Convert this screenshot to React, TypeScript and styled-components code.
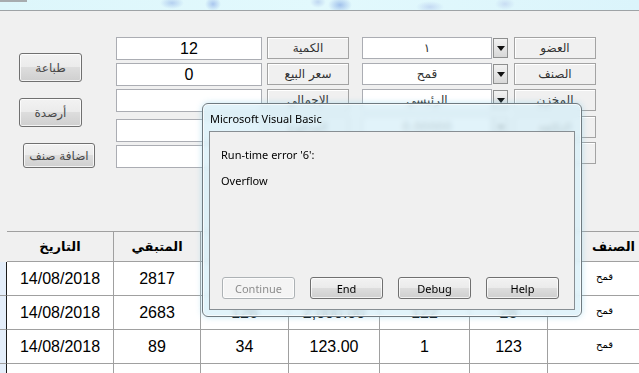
import styled, { createGlobalStyle } from "styled-components";

const GlobalStyle = createGlobalStyle`
  html, body {
    margin: 0;
    padding: 0;
    background: #f0f0f0;
    overflow: hidden;
  }
  * {
    box-sizing: border-box;
  }
`;

const arabic = `"DejaVu Sans", Tahoma, sans-serif`;
const latin = `"Liberation Sans", Arial, sans-serif`;
const ui = `"Segoe UI", "Noto Sans", "Liberation Sans", sans-serif`;

const Page = styled.div`
  position: relative;
  width: 639px;
  height: 373px;
  overflow: hidden;
  background: #f0f0f0;
`;

/* the blurred desktop behind the main window title */
const TopStrip = styled.div`
  position: relative;
  height: 11px;
  border-bottom: 1px solid #9ea3a6;
  background:
    radial-gradient(ellipse 12px 6px at 172px 3px, #b4d0f0, transparent),
    radial-gradient(ellipse 8px 7px at 213px 4px, #a9c6ee, transparent),
    radial-gradient(ellipse 8px 6px at 318px 2px, #c0d8f2, transparent),
    radial-gradient(ellipse 12px 8px at 340px 5px, #a2c2ec, transparent),
    radial-gradient(ellipse 14px 6px at 430px 7px, #c4daf3, transparent),
    radial-gradient(ellipse 10px 6px at 505px 4px, #c8ddf3, transparent),
    linear-gradient(90deg, #ddf6fb, #e2f9fd 50%, #dbf4fb);

  &::before {
    content: "";
    position: absolute;
    left: 0;
    top: 0;
    width: 27px;
    height: 2px;
    background: #a7acaf;
  }
`;

const FormArea = styled.div`
  display: flex;
  height: 220px;
  padding-top: 26px;
`;

const ButtonColumn = styled.div`
  display: flex;
  flex-direction: column;
  gap: 16px;
  width: 116px;
  padding: 16px 0 0 19px;
`;

const WinButton = styled.button<{ $w: number; $h: number; $indent?: number }>`
  width: ${(p) => p.$w}px;
  height: ${(p) => p.$h}px;
  margin-left: ${(p) => p.$indent ?? 0}px;
  padding: 0;
  border: 1px solid #707070;
  border-radius: 3px;
  background: linear-gradient(#f2f2f2 0%, #ebebeb 49%, #dddddd 50%, #cfcfcf 100%);
  box-shadow: inset 0 0 0 1px rgba(255, 255, 255, 0.75);
  font-family: ${arabic};
  font-size: 12px;
  color: #4a4a4a;
  cursor: default;
`;

const Fields = styled.div`
  display: flex;
  flex-direction: column;
  gap: 4px;
`;

const FieldRow = styled.div<{ $gapAbove?: number }>`
  display: flex;
  align-items: flex-start;
  height: 22px;
  margin-top: ${(p) => p.$gapAbove ?? 0}px;
`;

const TextBox = styled.div<{ $drop?: number }>`
  width: 146px;
  height: 23px;
  margin-top: ${(p) => p.$drop ?? 0}px;
  background: #fff;
  border: 1px solid #abadb3;
  font-family: ${latin};
  font-size: 16px;
  line-height: 21px;
  text-align: center;
  color: #000;
`;

const FieldLabel = styled.div<{ $w: number; $ml: number }>`
  width: ${(p) => p.$w}px;
  height: 22px;
  margin-left: ${(p) => p.$ml}px;
  border: 1px solid #a3a3a3;
  box-shadow: inset 1px 1px 0 #ffffff;
  background: #f0f0f0;
  font-family: ${arabic};
  font-size: 12px;
  line-height: 20px;
  text-align: center;
  color: #333;
`;

const Combo = styled.div`
  display: flex;
  gap: 1px;
  margin-left: 13px;
  height: 22px;
`;

const ComboText = styled.div`
  width: 130px;
  height: 22px;
  background: #fff;
  border: 1px solid #abadb3;
  font-family: ${arabic};
  font-size: 12px;
  line-height: 20px;
  text-align: center;
  color: #333;
`;

const ComboButton = styled.div`
  display: flex;
  align-items: center;
  justify-content: center;
  width: 15px;
  height: 20px;
  margin-top: 1px;
  border: 1px solid #8e8f8f;
  background: linear-gradient(#f2f2f2, #d8d8d8);

  &::after {
    content: "";
    border-left: 4px solid transparent;
    border-right: 4px solid transparent;
    border-top: 5px solid #111;
  }
`;

/* grid */
const Grid = styled.div`
  display: grid;
  grid-template-columns: 7px 107px 87px 88px 91px 90px 78px 116px;
  grid-template-rows: 31px;
  grid-auto-rows: 34px;
  width: 664px;
`;

const Selector = styled.div<{ $head?: boolean }>`
  background: ${(p) => (p.$head ? "#f0f0f0" : "#e4eefa")};
  border-right: 1px solid ${(p) => (p.$head ? "#f0f0f0" : "#1c1c1c")};
  border-bottom: 1px solid ${(p) => (p.$head ? "#f0f0f0" : "#a0a0a0")};
`;

const HeadCell = styled.div<{ $end?: boolean }>`
  display: flex;
  align-items: center;
  justify-content: ${(p) => (p.$end ? "flex-end" : "center")};
  padding-right: ${(p) => (p.$end ? "28px" : "0")};
  background: #f0f0f0;
  border-top: 1px solid #a0a0a0;
  border-right: 1px solid #a0a0a0;
  border-bottom: 1px solid #a0a0a0;
  font-family: ${arabic};
  font-weight: bold;
  font-size: 13px;
  color: #000;
`;

const Cell = styled.div<{ $item?: boolean }>`
  display: flex;
  align-items: center;
  justify-content: ${(p) => (p.$item ? "flex-end" : "center")};
  padding-right: ${(p) => (p.$item ? "50px" : "0")};
  padding-bottom: ${(p) => (p.$item ? "4px" : "0")};
  background: #fff;
  border-right: 1px solid #a0a0a0;
  border-bottom: 1px solid #a0a0a0;
  font-family: ${(p) => (p.$item ? arabic : latin)};
  font-size: ${(p) => (p.$item ? "10px" : "16px")};
  color: #000;
`;

/* error dialog */
const Dialog = styled.div`
  position: absolute;
  left: 202px;
  top: 103px;
  width: 380px;
  height: 214px;
  display: flex;
  flex-direction: column;
  padding: 0 6px 6px 6px;
  border: 1px solid #6f7a80;
  border-radius: 6px;
  background: rgba(218, 240, 249, 0.8);
  backdrop-filter: blur(2.5px);
  box-shadow: 0 0 6px rgba(120, 200, 230, 0.45), inset 0 0 0 1px rgba(255, 255, 255, 0.7);
`;

const DialogTitle = styled.div`
  height: 27px;
  padding-left: 1px;
  font-family: ${ui};
  font-size: 11px;
  line-height: 29px;
  color: #000;
  white-space: nowrap;
`;

const DialogBody = styled.div`
  flex: 1;
  display: flex;
  flex-direction: column;
  padding: 15px 0 0 11px;
  background: #f0f0f0;
  border: 1px solid #878e93;
  font-family: ${ui};
  font-size: 11px;
  color: #000;
`;

const Message = styled.div`
  height: 26px;
  line-height: 16px;
`;

const DialogButtons = styled.div`
  display: flex;
  gap: 15px;
  margin-top: auto;
  margin-bottom: 10px;
  margin-left: 1px;
`;

const DlgButton = styled.button<{ $disabled?: boolean }>`
  width: 73px;
  height: 22px;
  padding: 0;
  border: 1px solid ${(p) => (p.$disabled ? "#adb2b5" : "#707070")};
  border-radius: 3px;
  background: ${(p) =>
    p.$disabled
      ? "#f4f4f4"
      : "linear-gradient(#f2f2f2 0%, #ebebeb 49%, #dddddd 50%, #cfcfcf 100%)"};
  box-shadow: inset 0 0 0 1px rgba(255, 255, 255, 0.7);
  font-family: ${ui};
  font-size: 11px;
  color: ${(p) => (p.$disabled ? "#8d8d8d" : "#000")};
  cursor: default;
`;

const fieldRows = [
  { val: "12", mid: "الكمية", combo: "١", right: "العضو" },
  { val: "0", mid: "سعر البيع", combo: "قمح", right: "الصنف" },
  { val: "", mid: "الإجمالي", combo: "الرئيسي", right: "المخزن" },
  { val: "", mid: "المدفوع", combo: "0.00000", right: "التكلفة" },
  { val: "", mid: "الباقي", combo: "", right: "" },
];

const headers = ["التاريخ", "المتبقي", "الكمية", "السعر", "العضو", "الوارد"];

const rows = [
  ["14/08/2018", "2817", "12", "2,500.00", "1", "2829"],
  ["14/08/2018", "2683", "126", "2,000.00", "122", "28"],
  ["14/08/2018", "89", "34", "123.00", "1", "123"],
  ["", "", "", "", "", ""],
];

export default function App() {
  return (
    <Page>
      <GlobalStyle />
      <TopStrip />
      <FormArea>
        <ButtonColumn>
          <WinButton $w={63} $h={29}>طباعة</WinButton>
          <WinButton $w={63} $h={29}>أرصدة</WinButton>
          <WinButton $w={72} $h={25} $indent={4}>
            اضافة صنف
          </WinButton>
        </ButtonColumn>
        <Fields>
          {fieldRows.map((r, i) => (
            <FieldRow key={i} $gapAbove={i === 3 ? 1 : 0}>
              <TextBox $drop={i >= 3 ? 3 : 0}>{r.val}</TextBox>
              <FieldLabel $w={82} $ml={5}>{r.mid}</FieldLabel>
              <Combo>
                <ComboText>{r.combo}</ComboText>
                <ComboButton />
              </Combo>
              <FieldLabel $w={82} $ml={6}>{r.right}</FieldLabel>
            </FieldRow>
          ))}
        </Fields>
      </FormArea>

      <Grid>
        <Selector $head />
        {headers.map((h) => (
          <HeadCell key={h}>{h}</HeadCell>
        ))}
        <HeadCell $end>الصنف</HeadCell>
        {rows.map((r, i) => [
          <Selector key={`s${i}`} />,
          ...r.map((c, j) => <Cell key={`${i}-${j}`}>{c}</Cell>),
          <Cell key={`k${i}`} $item>
            {r[0] ? "قمح" : ""}
          </Cell>,
        ])}
      </Grid>

      <Dialog>
        <DialogTitle>Microsoft Visual Basic</DialogTitle>
        <DialogBody>
          <Message>Run-time error '6':</Message>
          <Message>Overflow</Message>
          <DialogButtons>
            <DlgButton $disabled>Continue</DlgButton>
            <DlgButton>End</DlgButton>
            <DlgButton>Debug</DlgButton>
            <DlgButton>Help</DlgButton>
          </DialogButtons>
        </DialogBody>
      </Dialog>
    </Page>
  );
}
